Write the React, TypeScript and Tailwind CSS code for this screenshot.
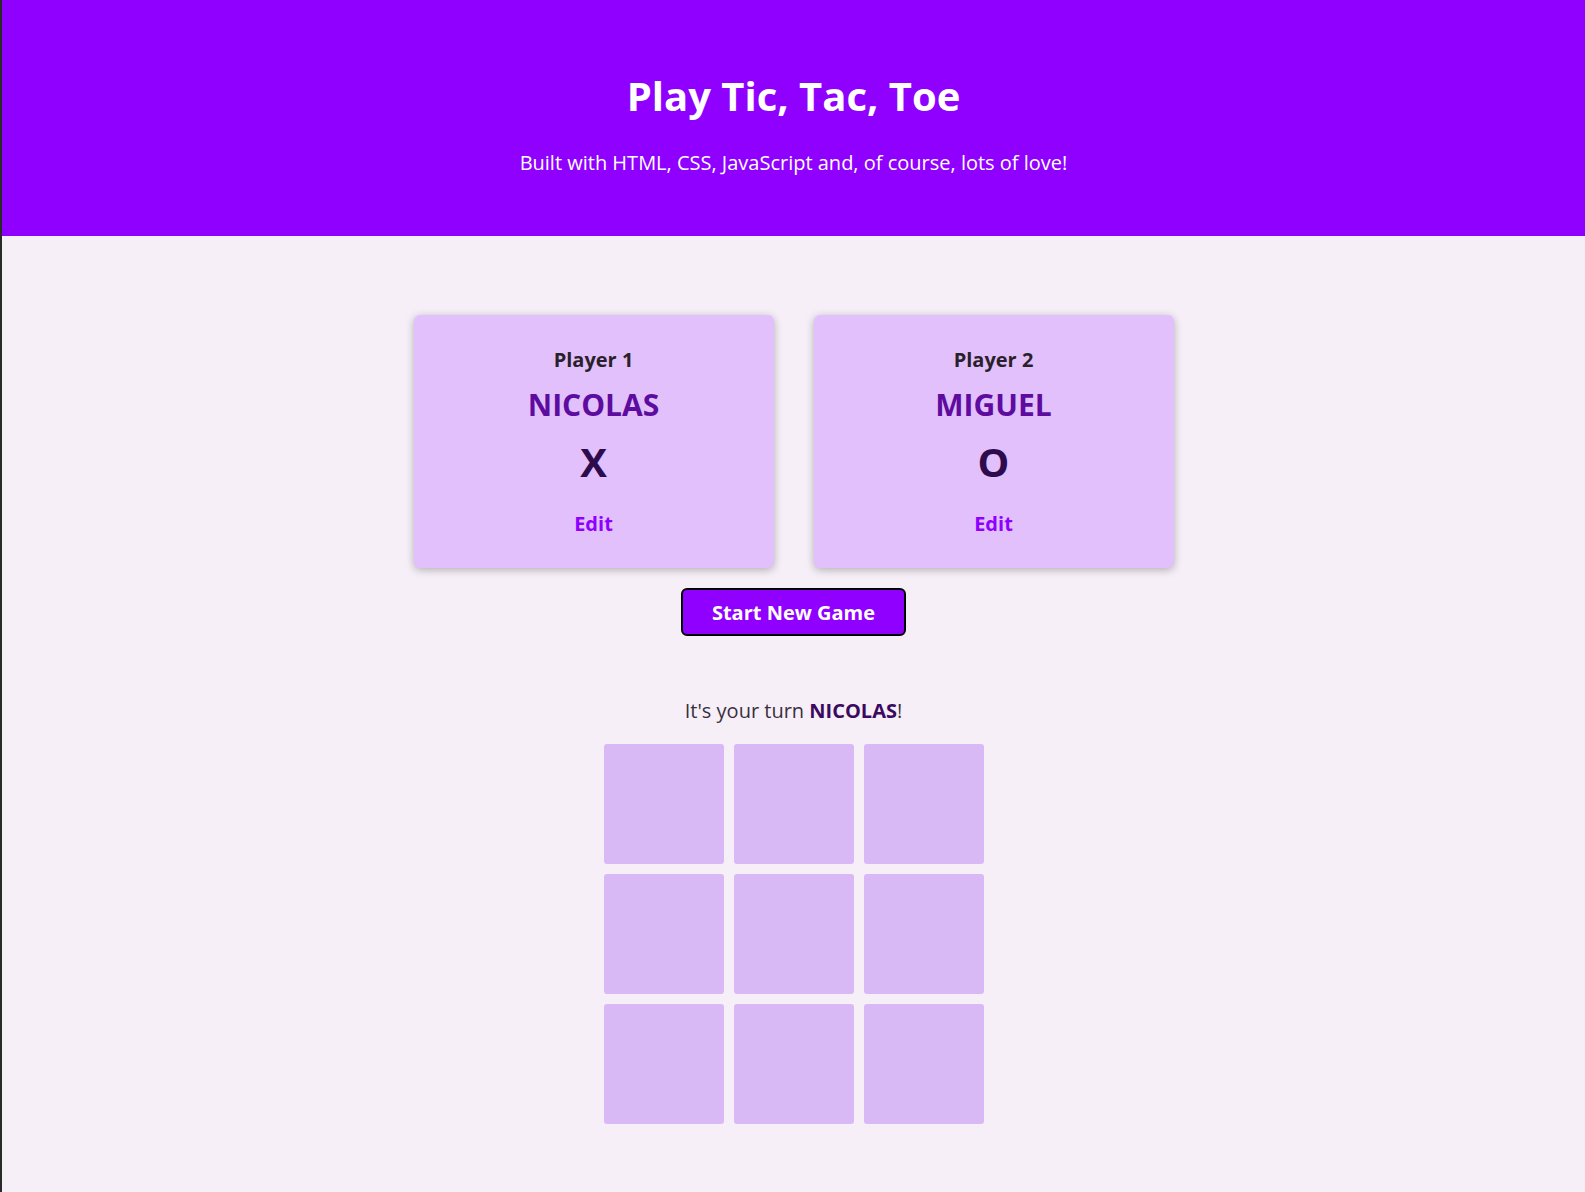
const players = [
  { label: 'Player 1', name: 'NICOLAS', symbol: 'X' },
  { label: 'Player 2', name: 'MIGUEL', symbol: 'O' },
];

const cells = Array.from({ length: 9 }, (_, i) => i);

export default function App() {
  return (
    <div
      className="min-h-screen bg-[#f6eff7] border-l-2 border-[#2a2a2a] text-[#2b2130]"
      style={{ fontFamily: '"Open Sans", "Noto Sans", sans-serif' }}
    >
      {/* ───── Header ───── */}
      <header className="bg-[#8f00ff] text-white text-center pt-[72px] pb-[58px]">
        <h1 className="text-[40px] leading-[48px] font-bold">Play Tic, Tac, Toe</h1>
        <p className="mt-[28px] text-[20px] leading-[30px]">
          Built with HTML, CSS, JavaScript and, of course, lots of love!
        </p>
      </header>

      <main className="flex flex-col items-center pt-[79px] pb-16">
        {/* ───── Player cards ───── */}
        <ol className="flex gap-10">
          {players.map(p => (
            <li
              key={p.label}
              className="w-[360px] h-[253px] rounded-md bg-[#e1c0fb] shadow-[0_2px_8px_rgba(0,0,0,0.28)] flex flex-col items-center pt-[30px]"
            >
              <h2 className="text-[20px] leading-[30px] font-bold text-[#2b1f2b]">{p.label}</h2>
              <h3 className="mt-[12px] text-[30px] leading-[36px] font-bold text-[#5e0ba0]">{p.name}</h3>
              <p className="mt-[15px] text-[40px] leading-[48px] font-bold text-[#2d0b4d]">{p.symbol}</p>
              <button className="mt-[23px] text-[20px] leading-[30px] font-bold text-[#8f00ff]">Edit</button>
            </li>
          ))}
        </ol>

        <button className="mt-[20px] w-[225px] h-[48px] pt-[2px] rounded-md border-2 border-black bg-[#8f00ff] text-white text-[20px] font-bold">
          Start New Game
        </button>

        {/* ───── Game board ───── */}
        <p className="mt-[60px] text-[20px] leading-[30px] text-[#3a2f3d]">
          It's your turn <span className="font-bold text-[#3b0a5e]">NICOLAS</span>!
        </p>
        <ol className="mt-[18px] grid grid-cols-[repeat(3,120px)] auto-rows-[120px] gap-[10px]">
          {cells.map(c => (
            <li key={c} className="rounded-[3px] bg-[#d8b9f5]" />
          ))}
        </ol>
      </main>
    </div>
  );
}
